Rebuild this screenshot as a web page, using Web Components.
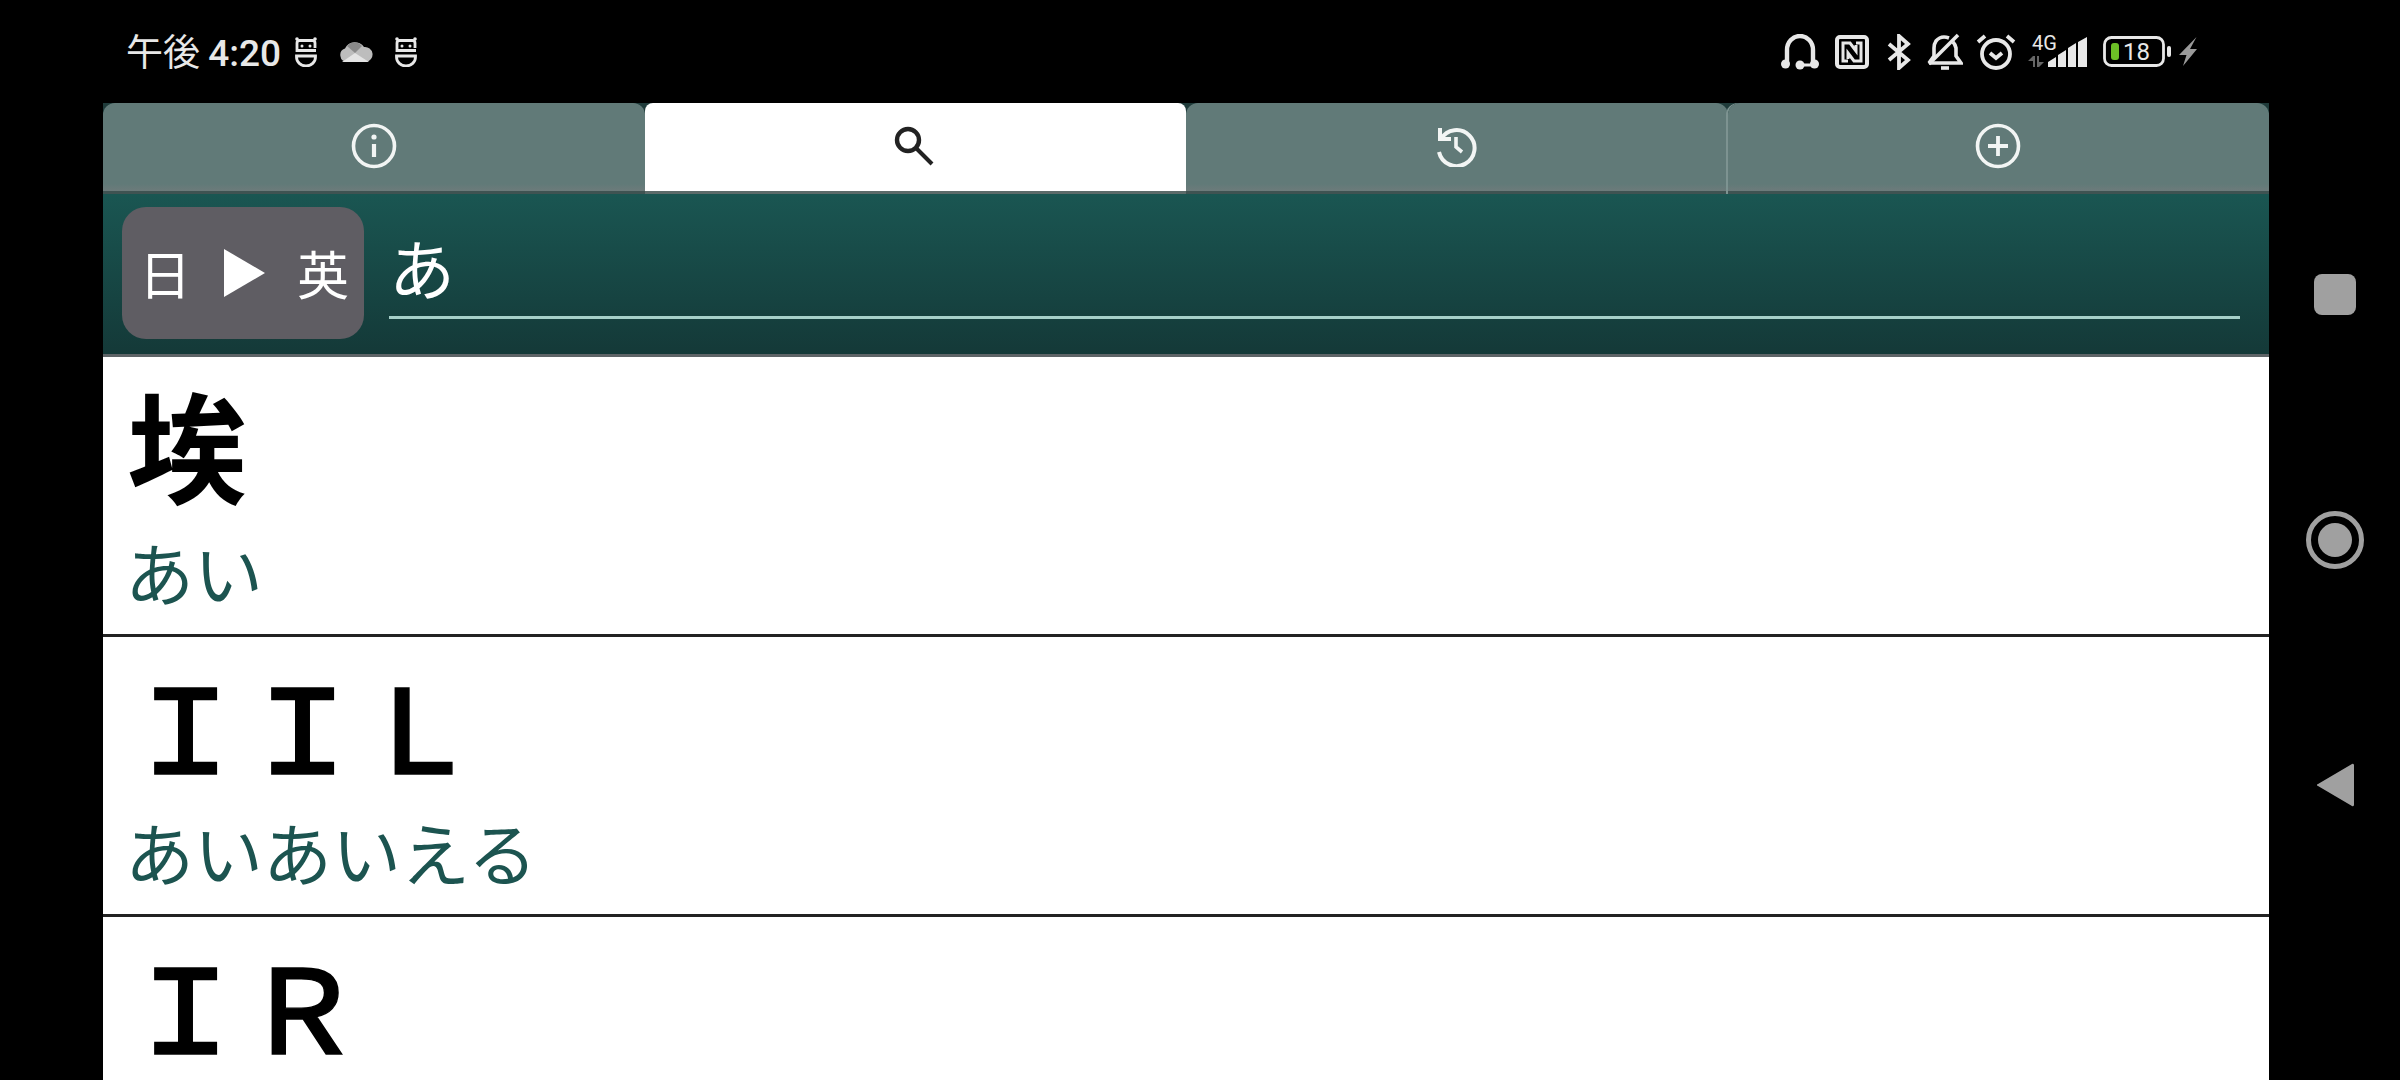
<!DOCTYPE html>
<html lang="ja">
<head>
<meta charset="utf-8">
<title>辞書</title>
<style>
    html, body { margin: 0; background: #000; }
</style>
</head>
<body>
<phone-screen>
    <status-bar slot="status"></status-bar>
    <dict-tabs slot="app"></dict-tabs>
    <search-bar slot="app" query="あ"></search-bar>
    <word-row slot="app" word="埃" reading="あい" size="120" weight="700" stroke="0"></word-row>
    <word-row slot="app" word="ＩＩＬ" reading="あいあいえる"></word-row>
    <word-row slot="app" word="ＩＲ"></word-row>
    <nav-rail slot="nav"></nav-rail>
</phone-screen>

<script>
const CJK = `"Noto Sans CJK JP", "Noto Sans", sans-serif`;

class PhoneScreen extends HTMLElement {
    constructor() {
        super();
        this.attachShadow({ mode: 'open' }).innerHTML = `
            <style>
                :host { display: flex; width: 2400px; height: 1080px; overflow: hidden; background: #000; }
                .main { width: 2269px; display: flex; flex-direction: column; }
                .app { margin-left: 103px; display: flex; flex-direction: column; flex: none; }
                .rail { width: 131px; }
            </style>
            <div class="main">
                <slot name="status"></slot>
                <div class="app"><slot name="app"></slot></div>
            </div>
            <div class="rail"><slot name="nav"></slot></div>`;
    }
}

const goblin = `<svg width="22" height="30" viewBox="0 0 22 30" fill="none" stroke="#e8e8e8" stroke-width="2.800">
    <circle cx="2" cy="2" r="1.800" fill="#e8e8e8" stroke="none"/>
    <circle cx="20" cy="2" r="1.800" fill="#e8e8e8" stroke="none"/>
    <path d="M20 11V6a2.500 2.500 0 0 0-2.500-2.500h-13A2.500 2.500 0 0 0 2 6v7.500h19"/>
    <path d="M1.500 19h19v1a9.500 9 0 0 1-19 0z"/>
    <circle cx="7" cy="9" r="1.500" fill="#e8e8e8" stroke="none"/>
    <circle cx="15" cy="9" r="1.500" fill="#e8e8e8" stroke="none"/>
</svg>`;

class StatusBar extends HTMLElement {
    constructor() {
        super();
        this.attachShadow({ mode: 'open' }).innerHTML = `
            <style>
                :host { display: flex; flex: none; height: 103px; align-items: center; justify-content: space-between;
                        padding: 0 71px 0 126px; color: #e8e8e8; box-sizing: border-box; }
                .left, .right { display: flex; align-items: center; }
                .time { font: 400 37px/1 ${CJK}; width: 169px; white-space: nowrap; }
                .time b { font: 500 37px/1 Roboto, sans-serif; }
                svg { display: block; flex: none; }
                .left svg:nth-of-type(2) { margin: 0 22px; }
                .sig { position: relative; width: 60px; height: 34px; margin: 0 15px 0 12px; }
                .sig span { position: absolute; left: 4px; top: -2px; font: 400 20px/1 Roboto, sans-serif; }
            </style>
            <div class="left">
                <span class="time">午後 <b>4:20</b></span>
                ${goblin}
                <svg width="34" height="22" viewBox="0 0 34 22">
                    <path d="M8 21a7 7 0 0 1-2-13.600A11 11 0 0 1 25 6a7.500 7.500 0 0 1 2 15z" fill="#bdbdbd"/>
                    <path d="M3 21l13-9 14 9z" fill="#e4e4e4"/>
                    <path d="M8 5a10 10 0 0 1 15 0l-7 7z" fill="#8a8a8a"/>
                </svg>
                ${goblin}
            </div>
            <div class="right">
                <svg width="38" height="36" viewBox="0 0 38 36" fill="none" stroke="#e8e8e8" stroke-width="4.400" style="margin-right:16px">
                    <path d="M6 30V16a13 14 0 0 1 26 0v14"/>
                    <path d="M20 31h14" stroke-width="3"/>
                    <circle cx="4.500" cy="30" r="4.500" fill="#e8e8e8" stroke="none"/>
                    <circle cx="33.500" cy="30" r="4.500" fill="#e8e8e8" stroke="none"/>
                    <circle cx="19" cy="31" r="4.500" fill="#e8e8e8" stroke="none"/>
                </svg>
                <svg width="34" height="34" viewBox="0 0 34 34" fill="none" stroke="#e8e8e8" stroke-width="4" style="margin-right:18px">
                    <rect x="2" y="2" width="30" height="30" rx="3"/>
                    <path d="M13 26H8V8h7l6 8v-6" stroke-width="3"/>
                    <path d="M21 8h5v18h-7l-6-8v6" stroke-width="3"/>
                </svg>
                <svg width="24" height="36" viewBox="0 0 24 36" fill="none" stroke="#e8e8e8" stroke-width="3.800" style="margin-right:16px">
                    <path d="M2 10l19 16-9 8V2l9 8L2 26"/>
                </svg>
                <svg width="36" height="37" viewBox="0 0 36 37" fill="none" stroke="#e8e8e8" stroke-width="3.600" style="margin-right:13px">
                    <path d="M2 30h32l-5-7v-8q-1-4-3-6M22 5q-8-3-13 3-2 3-2 7v8l-5 7"/>
                    <path d="M2 31L31 2"/>
                    <path d="M14 35h8"/>
                </svg>
                <svg width="40" height="37" viewBox="0 0 40 37" fill="none" stroke="#e8e8e8" stroke-width="3.800">
                    <circle cx="20" cy="21" r="14"/>
                    <path d="M14 20l6 5 6-5"/>
                    <path d="M2 9l7-6M38 9l-7-6"/>
                </svg>
                <div class="sig">
                    <span>4G</span>
                    <svg style="position:absolute;left:0;top:21px" width="16" height="11" viewBox="0 0 16 11" fill="#666"><path d="M0 5l5-5h2v11H5V5zM16 6l-5 5H9V0h2v6z"/></svg>
                    <svg style="position:absolute;left:20px;top:2px" width="40" height="30" viewBox="0 0 40 30" fill="#e8e8e8">
                        <path d="M0 30v-5l8-5v10zM10 30V18l8-5v17zM20 30V11l8-5v24zM30 30V5l9-5v30z"/>
                    </svg>
                </div>
                <svg width="69" height="31" viewBox="0 0 69 31" style="margin-right:7px">
                    <rect x="1.500" y="1.500" width="59" height="28" rx="7" fill="none" stroke="#e8e8e8" stroke-width="2.800"/>
                    <rect x="8" y="7" width="8" height="17" rx="3" fill="#6cbf26"/>
                    <text x="20" y="24" font-family="Roboto, sans-serif" font-size="24" fill="#e8e8e8">18</text>
                    <rect x="64" y="10" width="4" height="11" rx="2" fill="#e8e8e8"/>
                </svg>
                <svg width="19" height="29" viewBox="0 0 19 29"><path d="M17.500 0L0 18h7.500L4 29l14-17h-7z" fill="#9a9a9a"/></svg>
            </div>`;
    }
}

const TAB_ICONS = [
    `<svg width="46" height="46" viewBox="0 0 46 46" fill="none" stroke="#f2f5f4" stroke-width="3.600"><circle cx="23" cy="23" r="20.500"/><path d="M23 21v13" stroke-width="4.200"/><circle cx="23" cy="14" r="2.600" fill="#f2f5f4" stroke="none"/></svg>`,
    `<svg width="40" height="40" viewBox="0 0 40 40" fill="none" stroke="#222" stroke-width="4.400" style="margin-left:-2px"><circle cx="14" cy="14" r="11"/><path d="M22 22l16 16" stroke-width="4"/></svg>`,
    `<svg width="42" height="42" viewBox="0 0 42 42" fill="none" stroke="#f2f5f4" stroke-width="4" style="margin-left:-2px"><path d="M6 14A18 18 0 1 1 4 27"/><path d="M5 3v11h11"/><path d="M21 12v10l6 5" stroke-width="3.600"/></svg>`,
    `<svg width="46" height="46" viewBox="0 0 46 46" fill="none" stroke="#f2f5f4" stroke-width="3.600"><circle cx="23" cy="23" r="20.500"/><path d="M23 13v20M13 23h20" stroke-width="3.800"/></svg>`
];

class DictTabs extends HTMLElement {
    constructor() {
        super();
        const tabs = TAB_ICONS.map((svg, i) =>
            `<div class="tab ${i === 1 ? 'active' : ''}">${svg}</div>`).join('');
        this.attachShadow({ mode: 'open' }).innerHTML = `
            <style>
                :host { display: grid; flex: none; grid-template-columns: repeat(4, 1fr); height: 91px; background: #1f3b3a; }
                .tab { display: flex; align-items: center; justify-content: center; padding-bottom: 2px; box-sizing: border-box;
                       background: linear-gradient(#617a78 0, #617a78 92%, #6d7b7b 100%);
                       border-radius: 12px 12px 0 0; border-bottom: 3px solid #3f5352; }
                .tab + .tab { box-shadow: -2px 0 0 #7d9391; }
                .tab.active { background: #fff; border-bottom-color: #5c6b6a; box-shadow: none; border-radius: 8px 8px 0 0; }
                .tab.active + .tab { box-shadow: none; }
                svg { display: block; }
            </style>
            ${tabs}`;
    }
}

class SearchBar extends HTMLElement {
    constructor() {
        super();
        this.attachShadow({ mode: 'open' }).innerHTML = `
            <style>
                :host { display: flex; flex: none; height: 163px; box-sizing: border-box; padding: 13px 19px 15px 19px; gap: 25px;
                        background: linear-gradient(#1a5652, #143938); border-bottom: 3px solid #5e6467; }
                .mode { width: 242px; height: 132px; border-radius: 24px; background: #5f5d63; color: #fff;
                        display: flex; align-items: center; justify-content: space-between; padding: 0 15px 0 17px; box-sizing: border-box;
                        font: 400 52px/1 ${CJK}; flex: none; }
                .arrow { width: 0; height: 0; border-left: 41px solid #fff; border-top: 24px solid transparent; border-bottom: 24px solid transparent; }
                .field { flex: 1; height: 112px; border-bottom: 3px solid #a6d0c9; color: #fff; margin-right: 10px;
                         font: 400 66px/118px ${CJK}; box-sizing: border-box; }
            </style>
            <div class="mode"><span>日</span><span class="arrow"></span><span>英</span></div>
            <div class="field">${this.getAttribute('query')}</div>`;
    }
}

class WordRow extends HTMLElement {
    constructor() {
        super();
        const size = this.getAttribute('size') ?? 117;
        const weight = this.getAttribute('weight') ?? 500;
        const stroke = this.getAttribute('stroke') ?? 1.4;   // the latin rows sit between medium and bold
        const reading = this.getAttribute('reading');
        this.attachShadow({ mode: 'open' }).innerHTML = `
            <style>
                :host { display: block; flex: none; height: 280px; box-sizing: border-box; padding: 12px 0 0 24px; background: #fff;
                        border-bottom: 3px solid #222; }
                .word { font: ${weight} ${size}px/148px ${CJK}; color: #000; white-space: nowrap; -webkit-text-stroke: ${stroke}px #000; }
                .reading { font: 400 69px/90px ${CJK}; color: #1c5450; white-space: nowrap; margin: 9px 0 0 -2px; }
            </style>
            <div class="word">${this.getAttribute('word')}</div>
            ${reading ? `<div class="reading">${reading}</div>` : ''}`;
    }
}

class NavRail extends HTMLElement {
    constructor() {
        super();
        this.attachShadow({ mode: 'open' }).innerHTML = `
            <style>
                :host { display: flex; flex-direction: column; align-items: center; justify-content: center; height: 1080px; width: 131px; }
                .slot { height: 245px; display: flex; align-items: center; justify-content: center; }
                svg { display: block; }
            </style>
            <div class="slot"><svg width="42" height="42"><rect width="42" height="41" rx="8" fill="#a0a0a0"/></svg></div>
            <div class="slot"><svg width="58" height="58" viewBox="0 0 58 58"><circle cx="29" cy="29" r="26.500" fill="none" stroke="#a0a0a0" stroke-width="5"/><circle cx="29" cy="29" r="17" fill="#a0a0a0"/></svg></div>
            <div class="slot"><svg width="40" height="48" viewBox="0 0 40 48"><path d="M37 3L3 23a1 1 0 0 0 0 2l34 20a1.500 1.500 0 0 0 2-1V4a1.500 1.500 0 0 0-2-1z" fill="#a0a0a0"/></svg></div>`;
    }
}

customElements.define('phone-screen', PhoneScreen);
customElements.define('status-bar', StatusBar);
customElements.define('dict-tabs', DictTabs);
customElements.define('search-bar', SearchBar);
customElements.define('word-row', WordRow);
customElements.define('nav-rail', NavRail);
</script>
</body>
</html>
